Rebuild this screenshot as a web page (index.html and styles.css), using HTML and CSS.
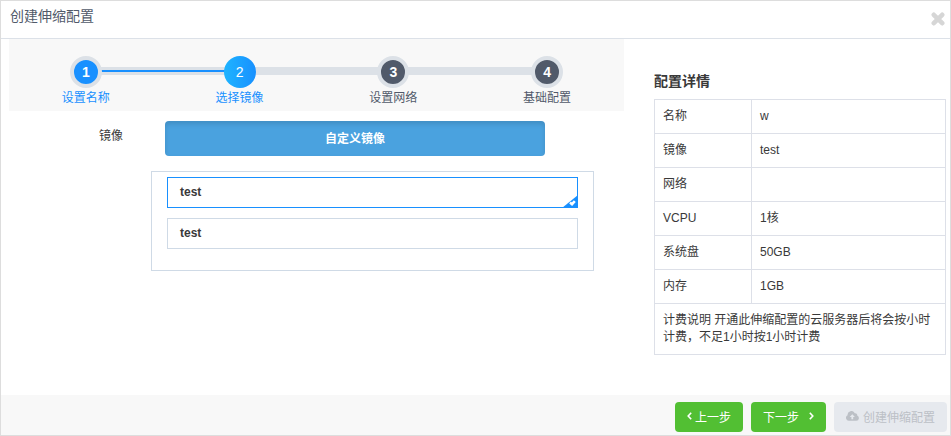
FILE: index.html
```html
<!DOCTYPE html>
<html lang="zh-CN">
<head>
    <meta charset="UTF-8">
    <meta name="viewport" content="width=device-width, initial-scale=1.0">
    <title>创建伸缩配置</title>
    <link rel="stylesheet" href="styles.css">
</head>
<body>
    <div class="modal">
        <header class="modal-header">
            <h1>创建伸缩配置</h1>
            <button type="button" class="close" aria-label="关闭">
                <svg width="14" height="14" viewBox="0 0 14 14"><path d="M2.8 2.8l8.4 8.4M11.2 2.8l-8.4 8.4" stroke="#d6d6d6" stroke-width="4.6" stroke-linecap="round"/></svg>
            </button>
        </header>

        <main class="modal-body">
            <section class="wizard">
                <ol class="steps">
                    <li class="done"><span class="num">1</span><span class="title">设置名称</span></li>
                    <li class="active"><span class="num">2</span><span class="title">选择镜像</span></li>
                    <li><span class="num">3</span><span class="title">设置网络</span></li>
                    <li><span class="num">4</span><span class="title">基础配置</span></li>
                </ol>

                <form class="image-form">
                    <span class="form-label" id="image-label">镜像</span>
                    <div class="form-field">
                        <button type="button" class="tab">自定义镜像</button>
                        <div class="image-list" role="radiogroup" aria-labelledby="image-label">
                            <div class="image-item">
                                <input type="radio" name="image" id="image-1" checked>
                                <label for="image-1">test
                                    <svg class="tick" width="16" height="13" viewBox="0 0 16 13"><path d="M16 0v13H0z" fill="#1890ff"/><path d="M8 7.6l2 1.6 2.8-3" fill="none" stroke="#fff" stroke-width="2.6"/></svg>
                                </label>
                            </div>
                            <div class="image-item">
                                <input type="radio" name="image" id="image-2">
                                <label for="image-2">test</label>
                            </div>
                        </div>
                    </div>
                </form>
            </section>

            <aside class="detail">
                <h2>配置详情</h2>
                <table>
                    <tbody>
                        <tr><th scope="row">名称</th><td>w</td></tr>
                        <tr><th scope="row">镜像</th><td>test</td></tr>
                        <tr><th scope="row">网络</th><td></td></tr>
                        <tr><th scope="row">VCPU</th><td>1核</td></tr>
                        <tr><th scope="row">系统盘</th><td>50GB</td></tr>
                        <tr><th scope="row">内存</th><td>1GB</td></tr>
                        <tr><td colspan="2">计费说明 开通此伸缩配置的云服务器后将会按小时计费，不足1小时按1小时计费</td></tr>
                    </tbody>
                </table>
            </aside>
        </main>

        <footer class="modal-footer">
            <button type="button" class="btn btn-prev">
                <svg width="5" height="8" viewBox="0 0 5 8"><path d="M4.2 .8L1.2 4l3 3.2" fill="none" stroke="#fff" stroke-width="1.6"/></svg>
                上一步
            </button>
            <button type="button" class="btn btn-next">
                下一步
                <svg width="5" height="8" viewBox="0 0 5 8"><path d="M.8 .8l3 3.2-3 3.2" fill="none" stroke="#fff" stroke-width="1.6"/></svg>
            </button>
            <button type="button" class="btn btn-create" disabled>
                <svg width="13" height="10" viewBox="0 0 13 10"><path d="M3 9.8A2.9 2.9 0 0 1 1.6 4.3 3.8 3.8 0 0 1 8.8 2.2a2 2 0 0 1 2.4 2.4A2.7 2.7 0 0 1 10.4 9.8z" fill="#bcc0c6"/><path d="M6.3 3.2l2.6 2.7H7.2v2.3H5.4V5.9H3.7z" fill="#e6e9ee"/></svg>
                创建伸缩配置
            </button>
        </footer>
    </div>
</body>
</html>
```
FILE: styles.css
```css
* {
    box-sizing: border-box;
}
body {
    font-family: "Liberation Sans", "Noto Sans CJK SC", sans-serif;
    font-size: 12px;
    line-height: 17px;
    margin: 0;
    color: #393939;
    background-color: #fff;
}
h1, h2 {
    margin: 0;
    font-weight: normal;
}
button {
    font-family: inherit;
    font-size: 12px;
    border: none;
    cursor: pointer;
}
svg {
    flex: none;
}
.modal {
    display: flex;
    flex-direction: column;
    min-height: 100vh;
    border: 1px solid #ddd;
}

/* header */
.modal-header {
    display: flex;
    justify-content: space-between;
    align-items: flex-start;
    padding: 5px 5px 12px 9px;
    border-bottom: 1px solid #dce1e8;
}
.modal-header h1 {
    font-size: 14px;
    line-height: 20px;
    color: #515a6a;
}
.close {
    display: flex;
    margin-top: 6px;
    padding: 0;
    background: none;
}

/* body */
.modal-body {
    display: flex;
    flex: 1;
    gap: 30px;
    padding: 0 4px 16px 8px;
}
.wizard {
    flex: 615 1 0;
    min-width: 0;
}
.steps {
    display: flex;
    margin: 0;
    padding: 17px 0 3px;
    list-style: none;
    background-color: #f8f8f8;
}
.steps li {
    position: relative;
    flex: 1;
    display: flex;
    flex-direction: column;
    align-items: center;
    color: #515a6a;
}
/* connecting bar to the next step */
.steps li:not(:last-child)::before {
    content: "";
    position: absolute;
    top: 11px;
    left: 50%;
    width: 100%;
    height: 8px;
    background-color: #dce1e7;
}
.steps .done::after {
    content: "";
    position: absolute;
    top: 14px;
    left: 50%;
    width: 100%;
    height: 2px;
    background-color: #1890ff;
}
.steps .num {
    position: relative;
    z-index: 1;
    width: 32px;
    height: 32px;
    border: 4px solid #dce1e7;
    border-radius: 50%;
    background-color: #515a6a;
    color: #fff;
    font-size: 14px;
    font-weight: bold;
    line-height: 24px;
    text-align: center;
}
.steps .title {
    line-height: 20px;
}
.steps .done,
.steps .active {
    color: #1890ff;
}
.steps .done .num {
    background-color: #1890ff;
}
.steps .active .num {
    border: none;
    background: linear-gradient(to right, #1eb4ff, #1890ff);
    font-weight: normal;
    line-height: 32px;
}

/* image choice */
.image-form {
    display: flex;
    padding: 10px 30px 0 0;
}
.form-label {
    width: 142px;
    padding: 7px 28px 0 0;
    text-align: right;
}
.form-field {
    flex: 1;
}
.tab {
    display: block;
    width: calc(100% - 63px);
    height: 35px;
    margin: 0 0 15px 14px;
    padding: 0 0 2px;
    border-radius: 4px;
    background-color: #4aa2df;
    box-shadow: inset 0 3px 5px rgba(0, 0, 0, 0.125);
    color: #fff;
    font-weight: bold;
}
.image-list {
    display: flex;
    flex-direction: column;
    gap: 10px;
    padding: 5px 15px 21px;
    border: 1px solid #cfdae6;
}
.image-item {
    position: relative;
}
.image-item input {
    position: absolute;
    inset: 0;
    margin: 0;
    opacity: 0;
}
.image-item label {
    display: block;
    padding: 6px 12px;
    border: 1px solid #cfdae6;
    font-weight: bold;
    cursor: pointer;
}
.image-item input:checked + label {
    border-color: #1890ff;
}
.tick {
    position: absolute;
    right: 0;
    bottom: 0;
}

/* detail */
.detail {
    flex: 292 1 0;
    min-width: 0;
    padding-top: 32px;
}
.detail h2 {
    margin-bottom: 8px;
    font-size: 14px;
    font-weight: bold;
    line-height: 20px;
}
.detail table {
    width: 100%;
    border-collapse: collapse;
    table-layout: fixed;
}
.detail th,
.detail td {
    height: 34px;
    padding: 8px;
    border: 1px solid #dde0e8;
    text-align: left;
    font-weight: normal;
}
.detail th {
    width: 97px;
}

/* footer */
.modal-footer {
    display: flex;
    justify-content: flex-end;
    gap: 8px;
    padding: 7px 3px 3px;
    background-color: #f8f8f8;
}
.btn {
    display: flex;
    align-items: center;
    height: 30px;
    padding: 0 12px 2px;
    border-radius: 4px;
    background-color: #52bf33;
    color: #fff;
}
.btn-prev {
    gap: 3px;
}
.btn-next {
    gap: 10px;
}
.btn-create {
    gap: 4px;
    background-color: #e6e9ee;
    color: #bcc0c6;
    cursor: not-allowed;
}
```
